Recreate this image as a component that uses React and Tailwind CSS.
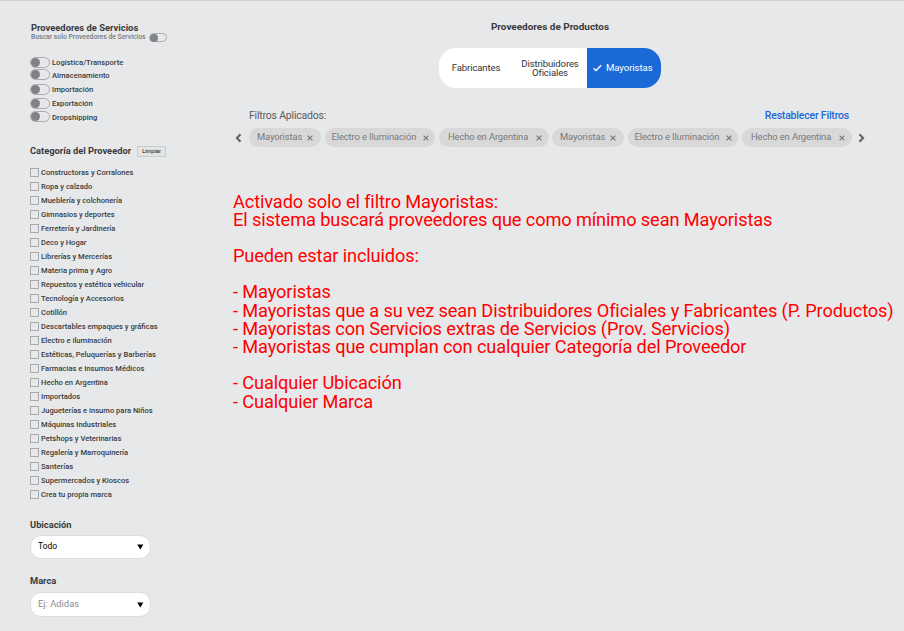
import React from "react";

const services = [
  ["Logística/Transporte", "h-[13px]", "mb-px"],
  ["Almacenamiento", "h-[14px]", "mb-[3px]"],
  ["Importación", "h-[14px]", "mb-[2px]"],
  ["Exportación", "h-[14px]", "mb-[2px]"],
  ["Dropshipping", "h-[14px]", "mb-[3px]"],
];

const categories = [
  "Constructoras y Corralones",
  "Ropa y calzado",
  "Mueblería y colchonería",
  "Gimnasios y deportes",
  "Ferretería y Jardinería",
  "Deco y Hogar",
  "Librerías y Mercerías",
  "Materia prima y Agro",
  "Repuestos y estética vehicular",
  "Tecnología y Accesorios",
  "Cotillón",
  "Descartables empaques y gráficas",
  "Electro e iluminación",
  "Estéticas, Peluquerías y Barberías",
  "Farmacias e Insumos Médicos",
  "Hecho en Argentina",
  "Importados",
  "Jugueterías e insumo para Niños",
  "Máquinas Industriales",
  "Petshops y Veterinarias",
  "Regalería y Marroquinería",
  "Santerías",
  "Supermercados y Kioscos",
  "Crea tu propia marca",
];

const chips = [
  ["Mayoristas", "w-[72px] mr-[4px] pl-[8px] pr-[8px]"],
  ["Electro e Iluminación", "w-[110px] mr-[4px] pl-[6.5px] pr-[6.5px]"],
  ["Hecho en Argentina", "w-[110px] mr-[3px] pl-[9px] pr-[7px]"],
  ["Mayoristas", "w-[72px] mr-[4px] pl-[8px] pr-[8px]"],
  ["Electro e Iluminación", "w-[110px] mr-[4px] pl-[6.5px] pr-[6.5px]"],
  ["Hecho en Argentina", "w-[110px] pl-[9px] pr-[7px]"],
];

const notes = [
  "Activado solo el filtro Mayoristas:",
  "El sistema buscará proveedores que como mínimo sean Mayoristas",
  "",
  "Pueden estar incluidos:",
  "",
  "- Mayoristas",
  "- Mayoristas que a su vez sean Distribuidores Oficiales y Fabricantes (P. Productos)",
  "- Mayoristas con Servicios extras de Servicios (Prov. Servicios)",
  "- Mayoristas que cumplan con cualquier Categoría del Proveedor",
  "",
  "- Cualquier Ubicación",
  "- Cualquier Marca",
];

function Toggle({ small, className = "" }) {
  return (
    <span
      className={
        (small
          ? "flex h-[9px] w-[18px] shrink-0 items-center rounded-full border border-[#a9abad] "
          : "flex h-[11px] w-[20px] shrink-0 items-center rounded-full border border-[#a9abad] ") + className
      }
    >
      <span className={small ? "size-[8px] rounded-full bg-[#808285]" : "size-[9px] rounded-full bg-[#808285]"} />
    </span>
  );
}

function Select({ text, className }) {
  return (
    <div
      className={
        "flex w-[121px] items-center justify-between rounded-[11px] border border-[#dcdddf] bg-white pl-[7px] pr-[6px] leading-none " +
        className
      }
    >
      <span className="mb-[2px]">{text}</span>
      <svg width="7" height="6" viewBox="0 0 7 6">
        <path d="M0.2 0.4H6.4L3.3 5.6Z" fill="#000" />
      </svg>
    </div>
  );
}

function Chevron({ flip }) {
  return (
    <svg width="7" height="10" viewBox="0 0 7 10" className={flip ? "rotate-180" : ""}>
      <path d="M5.5 1.2L1.9 5L5.5 8.8" fill="none" stroke="#636466" strokeWidth="2.1" />
    </svg>
  );
}

export default function App() {
  return (
    <div className="flex h-[631px] w-[904px] overflow-hidden border-t border-[#d0d1d3] bg-[#e7e8ea] font-[Roboto,sans-serif] text-[#3a3b3d]">
      <aside className="w-[220px] shrink-0 pl-[30px] pt-[22px]">
        <h2 className="pl-px text-[9.4px] font-bold leading-[10px] whitespace-nowrap">Proveedores de Servicios</h2>
        <div className="flex h-[9px] items-center gap-[3px] pl-px">
          <span className="mb-px w-[115px] text-[6.8px] font-medium leading-[8px] whitespace-nowrap text-[#77787b]">
            Buscar solo Proveedores de Servicios
          </span>
          <Toggle small />
        </div>

        <div className="mt-[14px]">
          {services.map(([name, h, lift]) => (
            <div key={name} className={"flex items-center gap-[2px] text-[7.6px] font-medium whitespace-nowrap " + h}>
              <Toggle className={lift} />
              <span>{name}</span>
            </div>
          ))}
        </div>

        <div className="mt-[21px] flex h-[11px] items-center gap-[5px]">
          <h2 className="mb-px w-[102px] text-[9.3px] font-bold whitespace-nowrap">Categoría del Proveedor</h2>
          <button className="flex h-[11px] w-[29px] items-center justify-center border border-[#cbcccd] bg-[#e3e4e4] font-['Liberation_Sans',sans-serif] text-[5.7px] font-medium leading-none text-black">
            Limpiar
          </button>
        </div>

        <div className="mt-[9px]">
          {categories.map((name) => (
            <label key={name} className="flex h-[14px] items-center gap-[2px] text-[7.59px] font-medium whitespace-nowrap">
              <span className="mb-[2px] size-[9px] shrink-0 border border-[#a6a8aa]" />
              <span>{name}</span>
            </label>
          ))}
        </div>

        <h2 className="mt-[17px] text-[9.3px] font-bold leading-[12px]">Ubicación</h2>
        <Select text="Todo" className="mt-[4px] h-[24px] text-[8.5px] text-black" />
        <h2 className="mt-[16px] text-[9.3px] font-bold leading-[12px]">Marca</h2>
        <Select text="Ej: Adidas" className="mt-[5px] h-[25px] text-[9.4px] text-[#8b8c8f]" />
      </aside>

      <main className="flex w-[684px] flex-col">
        <h2 className="ml-[220px] mt-[20px] w-[220px] text-center text-[9.95px] font-bold leading-[12px]">
          Proveedores de Productos
        </h2>
        <div className="ml-[219px] mt-[15px] flex h-[40px] w-[222px] overflow-hidden rounded-[17px] bg-white text-[9.6px] leading-[9px] tracking-[-0.15px] text-[#333436]">
          <div className="flex w-[74px] items-center justify-center pb-px">Fabricantes</div>
          <div className="flex w-[74px] items-center justify-center pb-px text-center">
            Distribuidores
            <br />
            Oficiales
          </div>
          <div className="flex flex-1 items-center gap-[4px] bg-[#1b69d8] pb-px pl-[6px] tracking-[-0.08px] text-white">
            <svg width="9" height="8" viewBox="0 0 9 8" className="mt-px">
              <path d="M0.6 4.2L3 6.5L8.2 1.2" fill="none" stroke="#fff" strokeWidth="1.3" />
            </svg>
            <span>Mayoristas</span>
          </div>
        </div>

        <div className="mt-[21px] flex h-[14px] items-center justify-between pl-[29px] pr-[55px] text-[10.5px] leading-[14px]">
          <span className="tracking-[-0.2px] text-[#5b5c5e]">Filtros Aplicados:</span>
          <a className="font-medium tracking-[-0.2px] text-[#1b69d8]">Restablecer Filtros</a>
        </div>
        <div className="mt-[5px] flex h-[19px] items-center pl-[15px]">
          <Chevron />
          <div className="ml-[7px] flex">
            {chips.map(([name, cls], i) => (
              <span
                key={i}
                className={
                  "flex h-[19px] shrink-0 items-center justify-between rounded-full bg-[#d8d8d8] text-[9.4px] leading-none tracking-[-0.11px] whitespace-nowrap text-[#77787a] " +
                  cls
                }
              >
                <span className="mb-px">{name}</span>
                <svg width="6" height="6" viewBox="0 0 6 6" className="mt-px">
                  <path d="M0.6 0.6L5.4 5.4M5.4 0.6L0.6 5.4" stroke="#737476" strokeWidth="1.1" />
                </svg>
              </span>
            ))}
          </div>
          <span className="ml-[6px] flex">
            <Chevron flip />
          </span>
        </div>

        <div className="ml-[13px] mt-[45.5px] text-[18.2px] leading-[18.2px] tracking-[-0.115px] whitespace-nowrap text-[#ff0000]">
          {notes.map((line, i) => (
            <p key={i} className="h-[18.2px]">
              {line}
            </p>
          ))}
        </div>
      </main>
    </div>
  );
}
